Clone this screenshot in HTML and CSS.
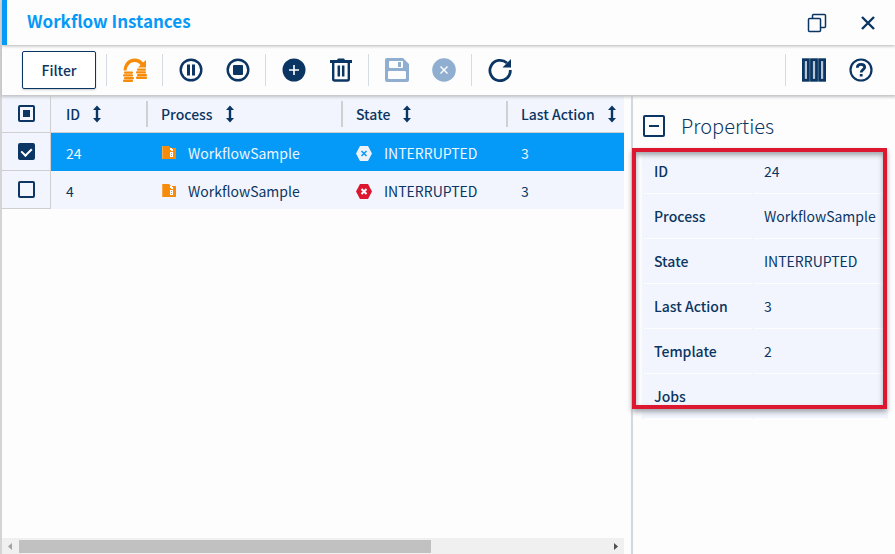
FILE: index.html
```html
<!DOCTYPE html>
<html lang="en">
<head>
<meta charset="utf-8">
<title>Workflow Instances</title>
<link rel="stylesheet" href="styles.css">
</head>
<body>
<svg class="defs" aria-hidden="true">
  <symbol id="sort" viewBox="0 0 10 18"><path d="M5 0.500 9 5H6.200v8H9L5 17.500 1 13h2.800V5H1z"/></symbol>
  <symbol id="folder" viewBox="0 0 14 14"><path fill="#f9a847" d="M0 0h1v13H0z"/><path fill="#f68c09" d="M1 0h6l2 2h5v11H1z"/><path fill="#fff" d="M8 2h2v1h1v2H9V4H8zM8 6h3v5H8z"/><path fill="#f68c09" d="M9 7h1v1H9zM9 9h1v1H9z"/></symbol>
  <symbol id="hex" viewBox="0 0 16 15"><path d="M4 0h8l4 7.500L12 15H4L0 7.500z"/></symbol>
</svg>
<div class="window">
  <header class="titlebar">
    <h1>Workflow Instances</h1>
    <button class="icon" aria-label="Restore"><svg width="20" height="20" viewBox="0 0 20 20" fill="none" stroke="#0b3563" stroke-width="1.500"><rect x="1.500" y="5.500" width="12" height="13" rx="1"/><path d="M5.500 5V2.500q0-1 1-1h11q1 0 1 1v11q0 1-1 1H14"/></svg></button>
    <button class="icon" aria-label="Close"><svg width="14" height="14" viewBox="0 0 14 14" stroke="#0b3563" stroke-width="2.400"><path d="M1 1l12 12M13 1 1 13"/></svg></button>
  </header>
  <div class="toolbar">
    <button class="filter">Filter</button>
    <div class="group">
      <button class="icon" aria-label="Resume"><svg width="24" height="24" viewBox="0 0 24 24" fill="#f68c09"><path d="M0.500 12.500C1 4.500 6 0.500 11.500 0.500c4 0 6.500 1.500 8.500 4l3-2.500v7.500h-8l2.500-2.500C16 5 14 4 11.500 4 7.500 4 4.500 7 3.500 12.500z"/><rect y="13.500" x="1" width="9" height="2.300" rx="1"/><rect y="16.200" width="10" height="2.300" rx="1"/><rect y="18.900" x="1" width="10" height="2.300" rx="1"/><rect y="21.600" width="10" height="2.400" rx="1"/><rect x="14" y="10.500" width="9" height="2.300" rx="1"/><rect x="13" y="13.200" width="10" height="2.300" rx="1"/><rect x="14" y="15.900" width="10" height="2.300" rx="1"/><rect x="13" y="18.600" width="11" height="2.300" rx="1"/></svg></button>
    </div>
    <div class="group">
      <button class="icon" aria-label="Pause"><svg width="24" height="24" viewBox="0 0 24 24"><circle cx="12" cy="12" r="10.300" fill="none" stroke="#0b3563" stroke-width="2.400"/><path fill="#0b3563" d="M8 6.500h3v11H8zM13 6.500h3v11h-3z"/></svg></button>
      <button class="icon" aria-label="Stop"><svg width="24" height="24" viewBox="0 0 24 24"><circle cx="12" cy="12" r="10.300" fill="none" stroke="#0b3563" stroke-width="2.400"/><rect fill="#0b3563" x="7" y="7" width="10" height="10" rx="1"/></svg></button>
    </div>
    <div class="group">
      <button class="icon" aria-label="Add"><svg width="24" height="24" viewBox="0 0 24 24"><circle cx="12" cy="12" r="11.500" fill="#0b3563"/><path d="M12 7v10M7 12h10" stroke="#fff" stroke-width="1.600"/></svg></button>
      <button class="icon" aria-label="Delete"><svg width="24" height="24" viewBox="0 0 24 24" fill="none" stroke="#0b3563"><path fill="#0b3563" stroke="none" d="M1 2h7l1-1.500h6L16 2h7v3H1z"/><path stroke-width="2.400" d="M4.200 4v17q0 1.500 1.500 1.500h12.600q1.500 0 1.500-1.500V4"/><path stroke-width="2.500" d="M9.800 7.500v11M14.200 7.500v11"/></svg></button>
    </div>
    <div class="group">
      <button class="icon" aria-label="Save" disabled><svg width="24" height="24" viewBox="0 0 24 24"><path fill="#8faed0" fill-rule="evenodd" d="M2 0h16l6 6v16q0 2-2 2H2q-2 0-2-2V2q0-2 2-2zM5 3q-1 0-1 1v5q0 1 1 1h12q1 0 1-1V3zM4 13q-1 0-1 1v6q0 1 1 1h16q1 0 1-1v-6q0-1-1-1z"/><rect x="13" y="4" width="3" height="5" fill="#8faed0"/></svg></button>
      <button class="icon" aria-label="Cancel" disabled><svg width="24" height="24" viewBox="0 0 24 24"><circle cx="12" cy="12" r="11.800" fill="#8faed0"/><path d="M8.500 8.500l7 7M15.500 8.500l-7 7" stroke="#fff" stroke-width="1.400"/></svg></button>
    </div>
    <div class="group">
      <button class="icon" aria-label="Refresh"><svg width="24" height="24" viewBox="0 0 24 24"><path d="M19 5A10.200 10.200 0 1 0 22.300 12" fill="none" stroke="#0b3563" stroke-width="2.800"/><path d="M23 1v8.500h-8.500z" fill="#0b3563"/></svg></button>
    </div>
    <div class="group end">
      <button class="icon" aria-label="Columns"><svg width="24" height="24" viewBox="0 0 24 24" fill="#b8c7d8" stroke="#0b3563" stroke-width="2.800"><rect x="1.400" y="1.700" width="5" height="20.600"/><rect x="9.500" y="1.700" width="5" height="20.600"/><rect x="17.600" y="1.700" width="5" height="20.600"/></svg></button>
      <button class="icon" aria-label="Help"><svg width="24" height="24" viewBox="0 0 24 24" fill="none" stroke="#0b3563"><circle cx="12" cy="12" r="10.500" stroke-width="2.200"/><path stroke-width="2.800" d="M8.300 9.700C8.300 7.200 9.800 6.300 12 6.300s3.700 1.200 3.700 3c0 2.300-3.500 2.500-3.500 5.200M12.200 16v2.600"/></svg></button>
    </div>
  </div>
  <div class="content">
    <main class="list">
      <table class="grid">
        <colgroup><col class="c-check"><col class="c-id"><col class="c-process"><col class="c-state"><col></colgroup>
        <thead>
          <tr>
            <th><input type="checkbox" class="mixed" aria-label="Select all"></th>
            <th><span class="head">ID<svg class="sort"><use href="#sort"/></svg></span></th>
            <th><span class="head">Process<svg class="sort"><use href="#sort"/></svg></span></th>
            <th><span class="head">State<svg class="sort"><use href="#sort"/></svg></span></th>
            <th><span class="head">Last Action<svg class="sort"><use href="#sort"/></svg></span></th>
          </tr>
        </thead>
        <tbody>
          <tr class="selected">
            <td><input type="checkbox" checked aria-label="Select 24"></td>
            <td>24</td>
            <td><span class="cell"><svg class="folder"><use href="#folder"/></svg>WorkflowSample</span></td>
            <td><span class="cell"><svg class="hex"><use href="#hex"/><path class="x" d="M5.500 5l5 5M10.500 5l-5 5"/></svg>INTERRUPTED</span></td>
            <td>3</td>
          </tr>
          <tr>
            <td><input type="checkbox" aria-label="Select 4"></td>
            <td>4</td>
            <td><span class="cell"><svg class="folder"><use href="#folder"/></svg>WorkflowSample</span></td>
            <td><span class="cell"><svg class="hex"><use href="#hex"/><path class="x" d="M5.500 5l5 5M10.500 5l-5 5"/></svg>INTERRUPTED</span></td>
            <td>3</td>
          </tr>
        </tbody>
      </table>
      <div class="scrollbar">
        <svg width="17" height="13" viewBox="0 0 17 13"><path d="M10 3v7L6 6.500z" fill="#a3a3a3"/></svg>
        <div class="track"><div class="thumb"></div></div>
        <svg width="17" height="13" viewBox="0 0 17 13"><path d="M7 3v7l4-3.500z" fill="#505050"/></svg>
      </div>
    </main>
    <aside class="properties">
      <h2><button class="collapse" aria-label="Collapse Properties"><svg width="22" height="22" viewBox="0 0 22 22" fill="none" stroke="#0b3563" stroke-width="2"><rect x="1" y="1" width="20" height="20" rx="1"/><path d="M6 11h10"/></svg></button>Properties</h2>
      <div class="details">
        <table>
          <tr><th>ID</th><td>24</td></tr>
          <tr><th>Process</th><td>WorkflowSample</td></tr>
          <tr><th>State</th><td>INTERRUPTED</td></tr>
          <tr><th>Last Action</th><td>3</td></tr>
          <tr><th>Template</th><td>2</td></tr>
          <tr><th>Jobs</th><td></td></tr>
        </table>
        <div class="highlight"></div>
      </div>
    </aside>
  </div>
</div>
</body>
</html>
```
FILE: styles.css
```css
* { box-sizing: border-box; }

body {
  margin: 0;
  font: 14px/20px "Noto Sans CJK SC", "Noto Sans", sans-serif;
  color: #0b3563;
  background: #fdfdfd;
}

.defs { position: absolute; width: 0; height: 0; }
svg { display: block; flex: none; }
button { padding: 0; border: 0; background: none; font: inherit; color: inherit; }

.window {
  display: flex;
  flex-direction: column;
  height: 100vh;
  border-left: 2px solid #d4d4d6;
}

.titlebar {
  position: relative;
  z-index: 1;
  display: flex;
  align-items: center;
  height: 45px;
  padding-right: 20px;
  border-left: 5px solid #0599f8;
  background: #fdfdfd;
  box-shadow: 0 1px 3px #b4b4b8;
}
.titlebar h1 {
  flex: 1;
  margin: 0;
  padding: 0 0 4px 20px;
  font-size: 17px;
  line-height: 24px;
  font-weight: 700;
  color: #0599f8;
}
.titlebar .icon { margin-left: 34px; }

.toolbar {
  position: relative;
  display: flex;
  align-items: center;
  height: 50px;
  padding: 0 22px 0 20px;
  background: #fdfdfd;
  box-shadow: 0 1px 3px 1px #c0c0c4;
}
.filter {
  width: 74px;
  height: 38px;
  margin-right: 10px;
  border: 1px solid #0b3563;
  border-radius: 2px;
  font-weight: 500;
  background: #fff;
  box-shadow: 0 1px 2px #c4cad2;
}
.group {
  display: flex;
  align-items: center;
  gap: 23px;
  height: 32px;
  padding: 0 15px 0 16px;
  border-left: 1px solid #d5dbe2;
}
.group.end { margin-left: auto; padding-right: 0; }

.content { flex: 1; display: flex; min-height: 0; }

.list {
  flex: 1;
  display: flex;
  flex-direction: column;
  justify-content: space-between;
  min-width: 0;
  margin-right: 7px;
}

.grid {
  width: 100%;
  table-layout: fixed;
  border-collapse: separate;
  border-spacing: 0;
  background: #f2f5fd;
}
.c-check { width: 49px; }
.c-id { width: 95px; }
.c-process { width: 195px; }
.c-state { width: 165px; }
.grid th, .grid td {
  height: 38px;
  padding: 2px 0 0 15px;
  text-align: left;
  white-space: nowrap;
}
.grid th { padding-top: 1px; border-bottom: 1px solid #cfcfd1; font-weight: 500; }
.grid th:first-child, .grid td:first-child {
  padding: 0;
  border-right: 1px solid #cfcfd1;
  border-bottom: 1px solid #cfcfd1;
  background: #f2f5fd;
}
.head { position: relative; display: flex; align-items: center; gap: 12px; }
th + th + th .head::before {
  content: "";
  position: absolute;
  left: -15px;
  width: 2px;
  height: 26px;
  background: #d0d0d2;
}
.sort { width: 10px; height: 18px; fill: #0b3563; }
.cell { display: flex; align-items: center; }
.folder { width: 14px; height: 14px; margin: 0 12px 0 1px; }
.hex { width: 16px; height: 15px; margin-right: 12px; fill: #dd1730; }
.x { stroke: #fff; stroke-width: 2; }
.selected td { color: #eef6fd; background: #0599f8; }
.selected .hex { fill: #eef2f6; }
.selected .x { stroke: #0599f8; stroke-width: 1.5px; }

input[type="checkbox"] {
  appearance: none;
  display: grid;
  place-items: center;
  width: 17px;
  height: 17px;
  margin: 0 auto;
  border: 2px solid #0b3563;
  border-radius: 2px;
}
.mixed::before { content: ""; width: 7px; height: 7px; background: #0b3563; }
input:checked { background: #0b3563; }
input:checked::before {
  content: "";
  width: 5px;
  height: 8px;
  margin-bottom: 2px;
  border: solid #fff;
  border-width: 0 2px 2px 0;
  transform: rotate(45deg);
}

.scrollbar { display: flex; align-items: center; height: 16px; background: #f0f0f0; }
.track { flex: 1; }
.thumb { width: 70%; height: 13px; background: #c1c1c1; }

.properties {
  width: 264px;
  padding-left: 9px;
  border-left: 2px solid #d3d8df;
}
.properties h2 {
  display: flex;
  align-items: center;
  gap: 16px;
  height: 54px;
  margin: 0;
  padding: 8px 0 0 1px;
  font-size: 20px;
  line-height: 28px;
  font-weight: 300;
}
.details { position: relative; width: 246px; }
.details table {
  width: 100%;
  table-layout: fixed;
  border-spacing: 2px 0;
  background: #f2f5fd;
}
.details th, .details td {
  height: 45px;
  padding: 0 0 0 10px;
  border-bottom: 1px solid #fdfdfd;
  text-align: left;
  font-weight: 500;
}
.details th { width: 108px; }
.details td { font-weight: 400; }
.highlight {
  position: absolute;
  inset: -1px 1px 10px -10px;
  border: 4px solid #dd1730;
  box-shadow: 0 3px 5px #a0a4ab, inset 0 3px 5px #a0a4ab;
}
```
